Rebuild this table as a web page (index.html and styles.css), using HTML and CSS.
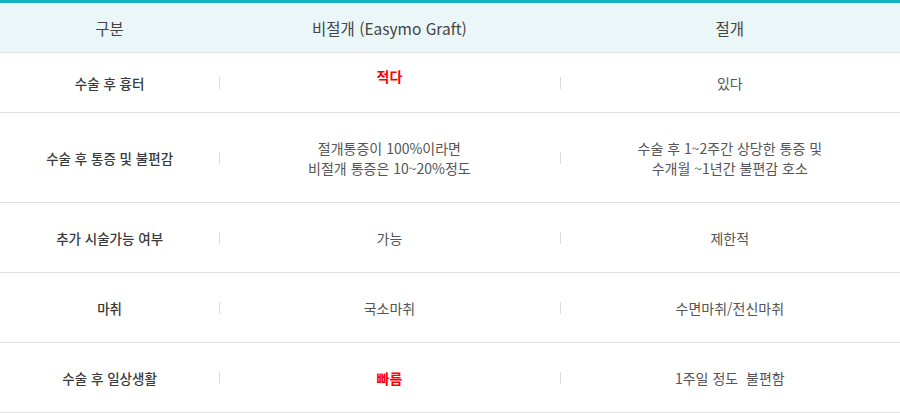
FILE: index.html
```html
<!DOCTYPE html>
<html lang="ko">
<head>
  <meta charset="UTF-8" />
  <meta name="viewport" content="width=device-width, initial-scale=1.0"/>
  <title>비절개 vs 절개 비교</title>
  <link rel="stylesheet" href="styles.css">
</head>
<body>

  <table class="compare">
    <colgroup>
      <col class="col-label" />
      <col class="col-main" />
      <col class="col-main" />
    </colgroup>
    <thead>
      <tr>
        <th>구분</th>
        <th>비절개 (Easymo Graft)</th>
        <th>절개</th>
      </tr>
    </thead>
    <tbody>
      <tr class="row-short">
        <td class="label">수술 후 흉터</td>
        <td class="sep"><span class="hot raised">적다</span></td>
        <td class="sep">있다</td>
      </tr>
      <tr class="row-tall">
        <td class="label">수술 후 통증 및 불편감</td>
        <td class="sep">절개통증이 100%이라면<br>비절개 통증은 10~20%정도</td>
        <td class="sep">수술 후 1~2주간 상당한 통증 및<br>수개월 ~1년간 불편감 호소</td>
      </tr>
      <tr>
        <td class="label">추가 시술가능 여부</td>
        <td class="sep">가능</td>
        <td class="sep">제한적</td>
      </tr>
      <tr>
        <td class="label">마취</td>
        <td class="sep">국소마취</td>
        <td class="sep">수면마취/전신마취</td>
      </tr>
      <tr>
        <td class="label">수술 후 일상생활</td>
        <td class="sep"><span class="hot">빠름</span></td>
        <td class="sep">1주일 정도&nbsp; 불편함</td>
      </tr>
    </tbody>
  </table>

</body>
</html>
```

FILE: styles.css
```css
body {
  margin: 0;
  font-family: "Noto Sans CJK KR", "Noto Sans", sans-serif;
  background: #fff;
}
.compare {
  width: 900px;
  border-collapse: collapse;
  table-layout: fixed;
  border-top: 3px solid #15b2c1;
}
.col-label {
  width: 219px;
}
.col-main {
  width: 340px;
}
.compare th,
.compare td {
  padding: 0;
  text-align: center;
  vertical-align: middle;
  border-bottom: 1px solid #e1e1e1;
}
.compare th {
  height: 49px;
  background: #eaf6f8;
  color: #444;
  font-size: 15.5px;
  font-weight: normal;
}
.compare td {
  height: 69px;
  color: #555;
  font-size: 14px;
  line-height: 20px;
}
.row-short td {
  height: 59px;
}
.row-tall td {
  height: 89px;
}
.compare td.label {
  color: #3a3a3a;
  font-size: 13.5px;
  font-weight: 500;
}
.compare td.sep {
  background: linear-gradient(#dcdcdc, #dcdcdc) no-repeat left center / 1px 12px;
}
.hot {
  color: #f00;
  font-weight: bold;
  font-size: 14px;
}
.raised {
  display: inline-block;
  margin-bottom: 14px;
}
```
